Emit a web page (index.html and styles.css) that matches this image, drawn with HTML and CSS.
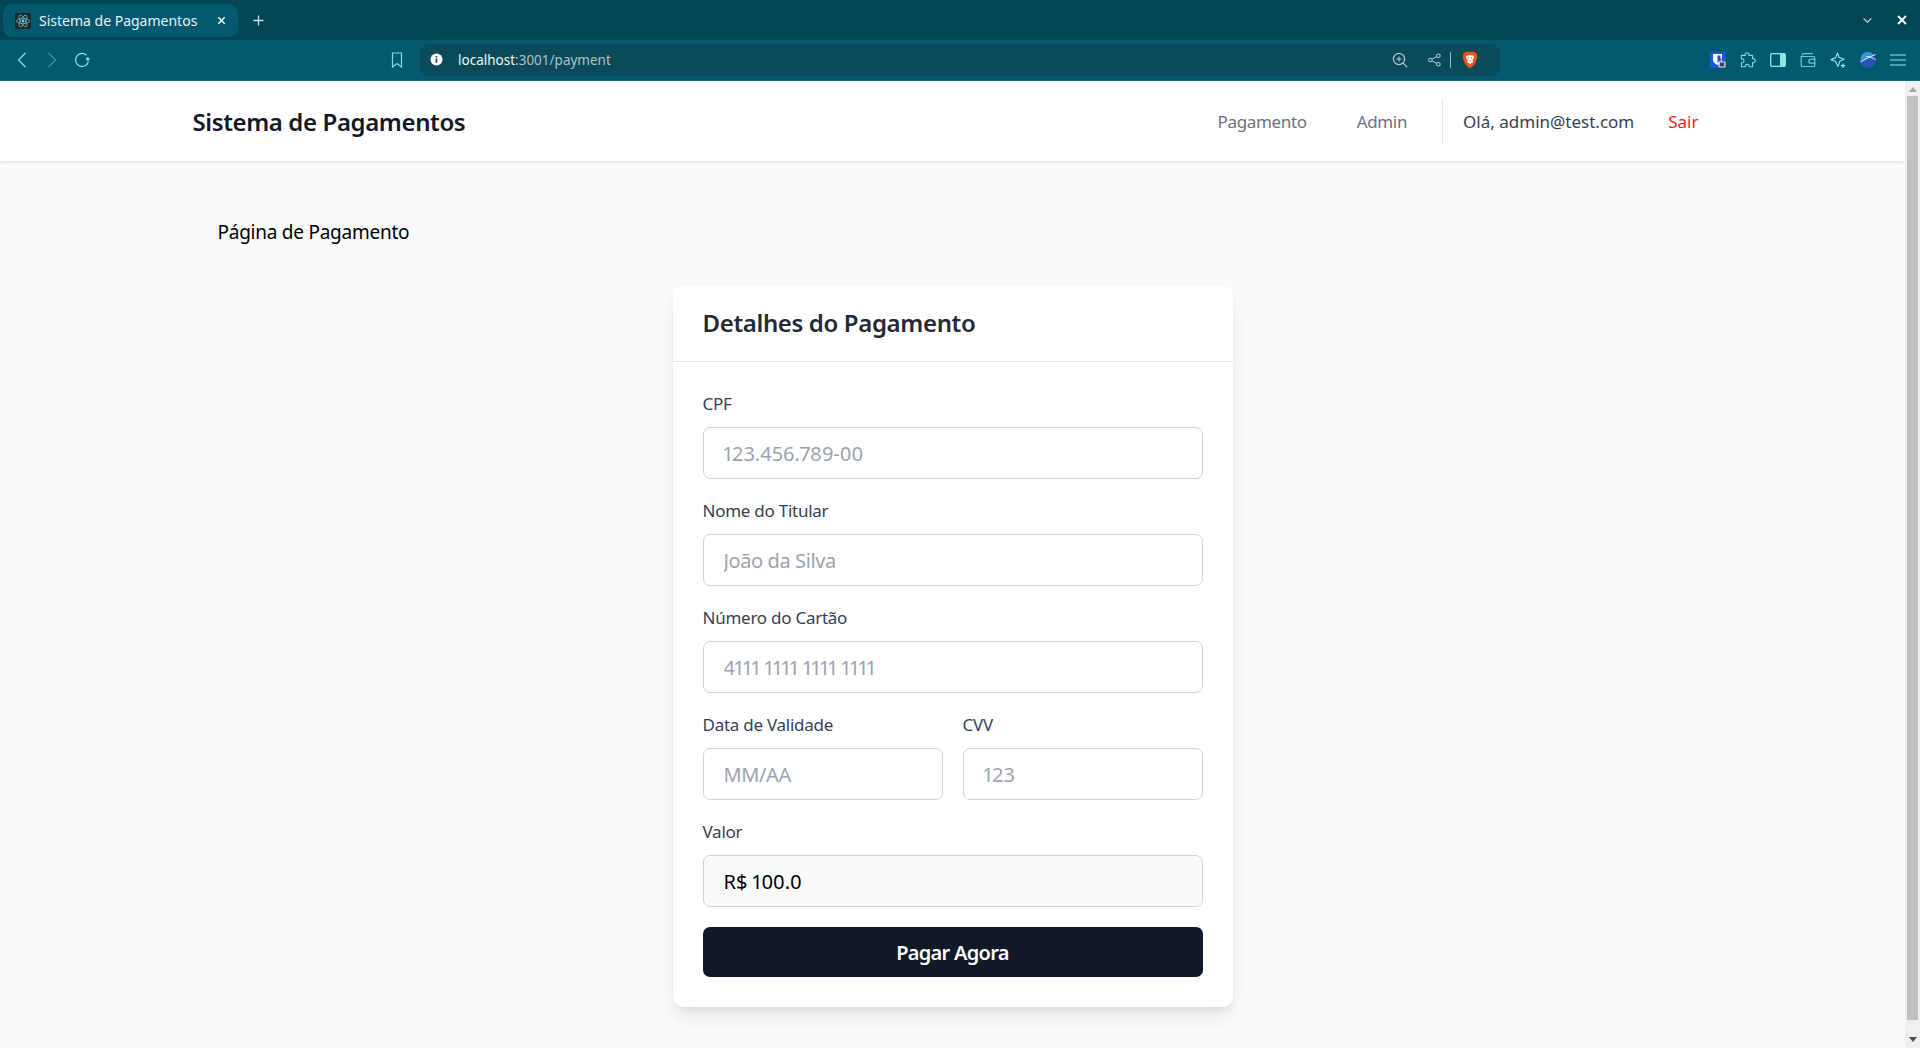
FILE: index.html
```html
<!DOCTYPE html>
<html lang="pt-BR">
<head>
    <meta charset="UTF-8">
    <meta name="viewport" content="width=device-width, initial-scale=1.0">
    <title>Sistema de Pagamentos</title>
    <link rel="stylesheet" href="styles.css">
</head>
<body>
    <!-- browser chrome -->
    <div class="tabstrip">
        <div class="tab">
            <svg class="favicon" viewBox="0 0 16 16">
                <rect width="16" height="16" rx="2" fill="#22272b"/>
                <g fill="none" stroke="#5fb6c9" stroke-width=".8">
                    <ellipse cx="8" cy="8" rx="6.6" ry="2.6"/>
                    <ellipse cx="8" cy="8" rx="6.6" ry="2.6" transform="rotate(60 8 8)"/>
                    <ellipse cx="8" cy="8" rx="6.6" ry="2.6" transform="rotate(120 8 8)"/>
                </g>
                <circle cx="8" cy="8" r="1.4" fill="#5fd3e6"/>
            </svg>
            <span class="tab-title">Sistema de Pagamentos</span>
            <svg class="tab-close" viewBox="0 0 10 10"><path d="M1.5 1.5l7 7M8.5 1.5l-7 7" stroke="#fff" stroke-width="1.6" fill="none"/></svg>
        </div>
        <svg class="tab-new" viewBox="0 0 12 12"><path d="M6 .5v11M.5 6h11" stroke="#c5dfe4" stroke-width="1.5" fill="none"/></svg>
        <div class="window-btns">
            <svg class="win-chevron" viewBox="0 0 12 8"><path d="M1.5 1.5L6 6l4.5-4.5" stroke="#b9dde2" stroke-width="1.3" fill="none"/></svg>
            <svg class="win-close" viewBox="0 0 10 10"><path d="M1 1l8 8M9 1l-8 8" stroke="#fff" stroke-width="1.9" fill="none"/></svg>
        </div>
    </div>
    <div class="toolbar">
        <span class="tool-btn">
            <svg width="10" height="16" viewBox="0 0 10 16"><path d="M8.5 1L1.5 8l7 7" stroke="#7fdbe0" stroke-width="1.4" fill="none"/></svg>
        </span>
        <span class="tool-btn">
            <svg width="10" height="16" viewBox="0 0 10 16"><path d="M1.5 1l7 7-7 7" stroke="#3a8c9b" stroke-width="1.4" fill="none"/></svg>
        </span>
        <span class="tool-btn">
            <svg width="16" height="16" viewBox="0 0 16 16"><path d="M12.5 3.2A6.5 6.5 0 1 0 14.4 9.5" stroke="#7fdbe0" stroke-width="1.3" fill="none"/><circle cx="13.7" cy="7" r="1.8" fill="#7fdbe0"/></svg>
        </span>
        <span class="tool-btn bookmark">
            <svg width="12" height="16" viewBox="0 0 12 16"><path d="M1.5 1h9v14L6 11.6 1.5 15z" stroke="#7fdbe0" stroke-width="1.2" fill="none"/></svg>
        </span>
        <div class="urlbar">
            <svg class="url-info" viewBox="0 0 14 14"><circle cx="7" cy="7" r="6.5" fill="#fff"/><path d="M7 6v4.5M7 3.2v1.6" stroke="#0b4a59" stroke-width="1.8" fill="none"/></svg>
            <span class="url-host">localhost</span><span class="url-rest">:3001/payment</span>
            <div class="url-icons">
                <svg class="url-zoom" viewBox="0 0 16 16"><circle cx="7" cy="7" r="5.6" stroke="#a9c6cc" stroke-width="1.2" fill="none"/><path d="M11 11l4.3 4.3M7 4.4v5.2M4.4 7h5.2" stroke="#a9c6cc" stroke-width="1.2" fill="none"/></svg>
                <svg class="url-share" viewBox="0 0 14 14"><g stroke="#a9c6cc" stroke-width="1.1" fill="none"><circle cx="2.6" cy="7" r="1.9"/><circle cx="11.2" cy="2.4" r="1.9"/><circle cx="11.2" cy="11.6" r="1.9"/><path d="M4.3 6.1l5.2-2.8M4.3 7.9l5.2 2.8"/></g></svg>
                <span class="url-sep"></span>
                <svg class="url-brave" viewBox="0 0 16 18">
                    <path d="M3.4.8h9.2l1.2 1.4 1.6.6-.7 2 .5 2-2.4 6.4L8 17.4 3.2 13.2.8 6.8l.5-2-.7-2 1.6-.6z" fill="#f4511e"/>
                    <path d="M4.4 4.8L8 4l3.6.8.6 1.6-1.8 2.8.8 1.8L8 13l-3-1.9.8-1.9-1.9-2.8z" fill="#fff"/>
                    <path d="M6 7h1.2M8.8 7H10M8 9v1.5" stroke="#f4511e" stroke-width=".9"/>
                </svg>
            </div>
        </div>
        <div class="extensions">
            <span class="tool-btn">
                <svg width="16" height="16" viewBox="0 0 16 16"><rect width="16" height="16" rx="1" fill="#1b56d6"/><path d="M3 2h9v6c0 2.5-2.5 4-4.5 5C5.5 12 3 10.5 3 8z" fill="#fff"/><path d="M7.5 3.5h3V8c0 1-1.5 2.2-3 3z" fill="#1b56d6"/><rect x="8.5" y="9.5" width="7" height="6" rx="1" fill="#ddd"/><path d="M10.5 9.5V8.3a1.5 1.5 0 0 1 3 0v1.2" stroke="#555" stroke-width="1" fill="none"/><rect x="9.8" y="10.5" width="4.5" height="4" fill="#444"/></svg>
            </span>
            <span class="tool-btn">
                <svg width="16" height="16" viewBox="0 0 16 16"><path d="M6.2 1c1.8-.9 3.4.6 2.6 2.4h3.8v3.3c1.8-.6 3.2 1.2 2.400 2.900-.5 1-1.500 1.200-2.400.9v4.300H9c.6-1.800-.9-2.800-2.300-2.400-1 .3-1.500 1.300-1.200 2.400H1.400v-4.100c1.800.5 3-1 2.500-2.500-.4-1.100-1.500-1.500-2.500-1.100V3.400h4C4.800 2.500 5.200 1.500 6.200 1z" stroke="#7fdbe0" stroke-width="1.100" fill="none" stroke-linejoin="round"/></svg>
            </span>
            <span class="tool-btn">
                <svg width="16" height="16" viewBox="0 0 16 16"><rect x=".7" y="1.700" width="14.600" height="12.600" rx="1" stroke="#8be6e6" stroke-width="1.300" fill="none"/><rect x="10" y="2" width="5" height="12" fill="#8be6e6"/></svg>
            </span>
            <span class="tool-btn">
                <svg width="16" height="16" viewBox="0 0 16 16"><path d="M2 3.500c0-1 .8-1.800 1.800-1.800h9M1.200 4.500h12.300c.7 0 1.300.6 1.300 1.300v7.400c0 .7-.6 1.300-1.300 1.300H2.500c-.7 0-1.300-.6-1.300-1.300zM15 7.200h-4.200a2 2 0 0 0 0 4H15" stroke="#6cc9cf" stroke-width="1.200" fill="none"/></svg>
            </span>
            <span class="tool-btn">
                <svg width="16" height="17" viewBox="0 0 16 17"><path d="M7.500 1l1.600 4.400L14 7.200 9.900 9.300 8 14.400 5.600 9.500 1 7.600l4.700-2z" stroke="#8be6e6" stroke-width="1.200" fill="none" stroke-linejoin="round"/><path d="M13 11.500v4.500M10.800 13.700h4.400" stroke="#8be6e6" stroke-width="1.200"/></svg>
            </span>
            <span class="tool-btn">
                <svg width="16" height="16" viewBox="0 0 16 16"><circle cx="8" cy="8" r="8" fill="#2a55b4"/><path d="M3 1.500A8 8 0 0 1 14 3L1 9A8 8 0 0 1 3 1.500z" fill="#2f9ad0"/><path d="M.5 10C5 7 10 5 15.500 2.500M6.500 4.500c3 .2 6.500 1.300 9 3.300" stroke="#e6f4f8" stroke-width="1" fill="none"/></svg>
            </span>
            <span class="tool-btn">
                <svg width="16" height="12" viewBox="0 0 16 12"><path d="M0 1h16M0 6h16M0 11h16" stroke="#8be6e6" stroke-width="1.200" fill="none"/></svg>
            </span>
        </div>
    </div>

    <!-- page -->
    <div class="viewport">
        <div class="page">
            <nav class="navbar">
                <div class="nav-inner">
                    <a class="brand">Sistema de Pagamentos</a>
                    <div class="nav-links">
                        <a class="nav-link">Pagamento</a>
                        <a class="nav-link">Admin</a>
                        <div class="nav-user">
                            <span class="user-name">Olá, admin@test.com</span>
                            <a class="logout">Sair</a>
                        </div>
                    </div>
                </div>
            </nav>
            <main class="content">
                <p class="page-title">Página de Pagamento</p>
                <div class="card">
                    <div class="card-header">
                        <h2>Detalhes do Pagamento</h2>
                    </div>
                    <form class="card-body">
                        <div class="form-group">
                            <label for="cpf">CPF</label>
                            <input type="text" id="cpf" class="digits" placeholder="123.456.789-00">
                        </div>
                        <div class="form-group">
                            <label for="nome">Nome do Titular</label>
                            <input type="text" id="nome" placeholder="João da Silva">
                        </div>
                        <div class="form-group">
                            <label for="cartao">Número do Cartão</label>
                            <input type="text" id="cartao" placeholder="4111 1111 1111 1111">
                        </div>
                        <div class="form-row">
                            <div class="form-group">
                                <label for="validade">Data de Validade</label>
                                <input type="text" id="validade" placeholder="MM/AA">
                            </div>
                            <div class="form-group">
                                <label for="cvv">CVV</label>
                                <input type="text" id="cvv" class="digits" placeholder="123">
                            </div>
                        </div>
                        <div class="form-group">
                            <label for="valor">Valor</label>
                            <input type="text" id="valor" class="digits readonly" value="R$ 100.0" readonly>
                        </div>
                        <button type="button" class="pay-btn">Pagar Agora</button>
                    </form>
                </div>
            </main>
        </div>
        <div class="scrollbar">
            <span class="arrow-up"></span>
            <span class="thumb"></span>
            <span class="arrow-down"></span>
        </div>
    </div>
</body>
</html>
```
FILE: styles.css
```css
* {
    box-sizing: border-box;
}
html, body {
    height: 100%;
}
body {
    margin: 0;
    font-family: "Noto Sans", sans-serif;
    display: flex;
    flex-direction: column;
    overflow: hidden;
    background-color: #f9fafb;
}

/* browser chrome */
.tabstrip {
    height: 40px;
    background-color: #024554;
    display: flex;
    align-items: center;
    padding-left: 3px;
    flex-shrink: 0;
}
.tab {
    width: 235px;
    height: 33px;
    margin-top: 1px;
    background-color: #035a6e;
    border-radius: 9px;
    display: flex;
    align-items: center;
    padding-left: 12px;
    color: #fff;
}
.favicon {
    width: 16px;
    height: 16px;
}
.tab-title {
    margin-left: 8px;
    font-size: 14px;
    white-space: nowrap;
    color: #e9f3f5;
}
.tab-close {
    width: 9px;
    height: 9px;
    margin-left: auto;
    margin-right: 12px;
}
.tab-new {
    width: 11px;
    height: 11px;
    margin-left: 15px;
}
.window-btns {
    margin-left: auto;
    display: flex;
    align-items: center;
}
.win-chevron {
    width: 11px;
    height: 7px;
    margin-right: 24px;
}
.win-close {
    width: 10px;
    height: 10px;
    margin-right: 13px;
}
.toolbar {
    height: 41px;
    background-color: #035a6e;
    border-bottom: 1px solid #13717f;
    display: flex;
    align-items: center;
    padding: 0 7px;
    flex-shrink: 0;
}
.tool-btn {
    width: 30px;
    height: 30px;
    display: flex;
    align-items: center;
    justify-content: center;
    flex-shrink: 0;
}
.bookmark {
    margin-left: 285px;
}
.urlbar {
    width: 1080px;
    height: 32px;
    margin-left: 8px;
    margin-top: -1px;
    background-color: #0b4a59;
    border-radius: 9px;
    display: flex;
    align-items: center;
    padding-left: 10px;
    font-size: 13.5px;
}
.url-info {
    width: 13px;
    height: 13px;
    margin-right: 15px;
}
.url-host {
    color: #f0f6f7;
}
.url-rest {
    color: #a9c3c9;
}
.url-icons {
    margin-left: auto;
    display: flex;
    align-items: center;
}
.url-zoom {
    width: 16px;
    height: 16px;
}
.url-share {
    width: 13px;
    height: 14px;
    margin-left: 20px;
}
.url-sep {
    width: 1px;
    height: 16px;
    margin-left: 9px;
    background-color: #9ab8be;
}
.url-brave {
    width: 16px;
    height: 18px;
    margin-left: 11px;
    margin-right: 22px;
}
.extensions {
    margin-left: auto;
    display: flex;
}

/* page */
.viewport {
    flex: 1;
    display: flex;
    min-height: 0;
}
.page {
    flex: 1;
    min-width: 0;
}
.navbar {
    height: 80px;
    background-color: #fff;
    box-shadow: 0 1px 3px rgba(0, 0, 0, 0.12);
}
.nav-inner {
    max-width: 1600px;
    height: 100%;
    margin: 0 auto;
    padding: 0 16px 0 40px;
    display: flex;
    align-items: center;
    justify-content: space-between;
}
.brand {
    font-size: 24px;
    font-weight: 600;
    letter-spacing: -0.016em;
    color: #111827;
}
.nav-links {
    display: flex;
    align-items: center;
}
.nav-link {
    font-size: 17px;
    letter-spacing: -0.02em;
    color: #6b7280;
    margin-right: 50px;
}
.nav-link + .nav-link {
    margin-right: 35px;
}
.nav-user {
    height: 45px;
    border-left: 1px solid #e5e7eb;
    padding-left: 20px;
    padding-right: 38px;
    display: flex;
    align-items: center;
    font-size: 17px;
}
.user-name {
    color: #374151;
    margin-right: 34px;
}
.logout {
    color: #ef1c24;
}
.content {
    max-width: 1600px;
    margin: 0 auto;
    padding: 56px 0 0;
}
.page-title {
    margin: 0 0 39px 65px;
    font-size: 19px;
    line-height: 30px;
    letter-spacing: -0.013em;
    color: #000;
}
.card {
    width: 560px;
    margin: 0 auto;
    background-color: #fff;
    border-radius: 10px;
    box-shadow: 0 12px 18px -4px rgba(0, 0, 0, 0.1), 0 5px 8px -3px rgba(0, 0, 0, 0.05);
}
.card-header {
    padding: 20px 30px;
    border-bottom: 1px solid #e5e7eb;
}
.card-header h2 {
    margin: 0;
    font-size: 24px;
    line-height: 34px;
    padding-bottom: 1px;
    font-weight: 600;
    letter-spacing: -0.015em;
    color: #1f2937;
}
.card-body {
    padding: 30px;
}
.form-group {
    margin-bottom: 20px;
}
.form-group label {
    display: block;
    margin-bottom: 11px;
    font-size: 17px;
    line-height: 24px;
    letter-spacing: -0.015em;
    color: #374151;
}
.form-group input {
    display: block;
    width: 100%;
    height: 52px;
    padding: 0 20px;
    font-family: inherit;
    font-size: 20px;
    font-variant-numeric: proportional-nums;
    letter-spacing: -0.02em;
    color: #000;
    background-color: #fff;
    border: 1px solid #d1d5db;
    border-radius: 7px;
    outline: none;
}
.form-group input.digits {
    letter-spacing: 0;
}
.form-group input::placeholder {
    color: #9ca3af;
}
.form-group input.readonly {
    background-color: #f9fafb;
}
.form-row {
    display: grid;
    grid-template-columns: 1fr 1fr;
    gap: 20px;
}
.pay-btn {
    display: block;
    width: 100%;
    height: 50px;
    font-family: inherit;
    font-size: 20px;
    font-weight: 600;
    letter-spacing: -0.035em;
    color: #fff;
    background-color: #111827;
    border: none;
    border-radius: 7px;
}

/* scrollbar */
.scrollbar {
    width: 15px;
    background-color: #f0f0f0;
    display: flex;
    flex-direction: column;
    align-items: center;
    flex-shrink: 0;
}
.arrow-up {
    width: 0;
    height: 0;
    margin-top: 6px;
    border-left: 4px solid transparent;
    border-right: 4px solid transparent;
    border-bottom: 5px solid #a3a3a3;
}
.thumb {
    width: 11px;
    height: 924px;
    margin-top: 4px;
    background-color: #c1c1c1;
}
.arrow-down {
    width: 0;
    height: 0;
    margin-top: auto;
    margin-bottom: 6px;
    border-left: 4px solid transparent;
    border-right: 4px solid transparent;
    border-top: 5px solid #505050;
}
```
